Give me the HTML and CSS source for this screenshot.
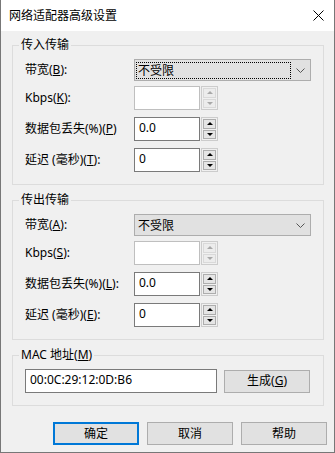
FILE: index.html
```html
<!DOCTYPE html>
<html lang="zh-CN">
<head>
  <meta charset="UTF-8" />
  <title>网络适配器高级设置</title>
  <link rel="stylesheet" href="styles.css">
</head>
<body>
  <div class="window">
    <div class="titlebar">
      <span class="title">网络适配器高级设置</span>
      <svg class="close" width="11" height="11" viewBox="0 0 11 11">
        <path d="M0.5 0.5 L10.5 10.5 M10.5 0.5 L0.5 10.5" stroke="#000" stroke-width="1" fill="none" />
      </svg>
    </div>

    <div class="content">
      <fieldset class="group">
        <legend>传入传输</legend>
        <div class="rows">
          <div class="row row-select">
            <label>带宽(<u>B</u>):</label>
            <div class="select">
              <span class="value focused">不受限</span>
              <span class="chevron"><svg width="9" height="5" viewBox="0 0 9 5"><path d="M0.5 0.5 L4.5 4.5 L8.5 0.5" stroke="#555" fill="none" /></svg></span>
            </div>
          </div>
          <div class="row">
            <label>Kbps(<u>K</u>):</label>
            <div class="spin disabled">
              <div class="field"></div>
              <div class="spinner"><span class="btn"><i class="up"></i></span><span class="btn"><i class="down"></i></span></div>
            </div>
          </div>
          <div class="row">
            <label>数据包丢失(%)(<u>P</u>)</label>
            <div class="spin">
              <div class="field">0.0</div>
              <div class="spinner"><span class="btn"><i class="up"></i></span><span class="btn"><i class="down"></i></span></div>
            </div>
          </div>
          <div class="row">
            <label>延迟 (毫秒)(<u>T</u>):</label>
            <div class="spin">
              <div class="field">0</div>
              <div class="spinner"><span class="btn"><i class="up"></i></span><span class="btn"><i class="down"></i></span></div>
            </div>
          </div>
        </div>
      </fieldset>

      <fieldset class="group">
        <legend>传出传输</legend>
        <div class="rows">
          <div class="row row-select">
            <label>带宽(<u>A</u>):</label>
            <div class="select">
              <span class="value">不受限</span>
              <span class="chevron"><svg width="9" height="5" viewBox="0 0 9 5"><path d="M0.5 0.5 L4.5 4.5 L8.5 0.5" stroke="#555" fill="none" /></svg></span>
            </div>
          </div>
          <div class="row">
            <label>Kbps(<u>S</u>):</label>
            <div class="spin disabled">
              <div class="field"></div>
              <div class="spinner"><span class="btn"><i class="up"></i></span><span class="btn"><i class="down"></i></span></div>
            </div>
          </div>
          <div class="row">
            <label>数据包丢失(%)(<u>L</u>):</label>
            <div class="spin">
              <div class="field">0.0</div>
              <div class="spinner"><span class="btn"><i class="up"></i></span><span class="btn"><i class="down"></i></span></div>
            </div>
          </div>
          <div class="row">
            <label>延迟 (毫秒)(<u>E</u>):</label>
            <div class="spin">
              <div class="field">0</div>
              <div class="spinner"><span class="btn"><i class="up"></i></span><span class="btn"><i class="down"></i></span></div>
            </div>
          </div>
        </div>
      </fieldset>

      <fieldset class="group">
        <legend>MAC 地址(<u>M</u>)</legend>
        <div class="rows mac-row">
          <div class="mac-field">00:0C:29:12:0D:B6</div>
          <button class="button small">生成(<u>G</u>)</button>
        </div>
      </fieldset>

      <div class="buttons">
        <button class="button default">确定</button>
        <button class="button">取消</button>
        <button class="button">帮助</button>
      </div>
    </div>
  </div>
</body>
</html>
```

FILE: styles.css
```css
* {
  box-sizing: border-box;
}
body {
  margin: 0;
  background: #fff;
  color: #000;
  font-family: "Noto Sans", "Noto Sans CJK SC", sans-serif;
  font-size: 12px;
}
.window {
  width: 335px;
  height: 453px;
  background: #f0f0f0;
  border: 1px solid #777;
  border-top: none;
}
.titlebar {
  height: 31px;
  background: #fff;
  display: flex;
  align-items: center;
  justify-content: space-between;
  padding: 0 10px 0 8px;
}
.title {
  line-height: 16px;
}
.close {
  display: block;
  margin-top: 0;
}
.content {
  padding: 6px 0 0 11px;
}
.group {
  width: 312px;
  margin: 0 0 0 0;
  padding: 0;
  border: 1px solid #dcdcdc;
}
.group + .group {
  margin-top: 7px;
}
.group legend {
  margin-left: 6px;
  padding: 0 2px;
  height: 16px;
  line-height: 16px;
}
.rows {
  padding: 6px 0 12px 12px;
}
.row {
  display: flex;
  align-items: center;
  height: 24px;
  margin-top: 7px;
}
.row-select {
  height: 22px;
  margin-top: 0;
}
.row-select + .row {
  margin-top: 5px;
}
.row label {
  flex: 0 0 109px;
  line-height: 16px;
  white-space: nowrap;
}
.select {
  width: 177px;
  height: 22px;
  display: flex;
  padding: 1px 0 1px 1px;
  background: #e1e1e1;
  border: 1px solid #adadad;
}
.select .value {
  flex: 0 0 155px;
  line-height: 16px;
  padding-left: 1px;
  border: 1px dotted transparent;
  margin-top: 1px;
  height: 17px;
}
.select .value.focused {
  border-color: #000;
}
.chevron {
  flex: 1;
  display: flex;
  align-items: center;
  justify-content: center;
}
.chevron svg {
  display: block;
}
.spin {
  display: flex;
  height: 24px;
}
.field {
  width: 66px;
  height: 24px;
  background: #fff;
  border: 1px solid #7a7a7a;
  padding-left: 4px;
  line-height: 20px;
}
.spinner {
  width: 17px;
  height: 24px;
  margin-left: 1px;
  border: 1px solid #cccccc;
  display: flex;
  flex-direction: column;
  padding: 1px;
  gap: 1px;
}
.spinner .btn {
  flex: 1;
  background: #e5e5e5;
  border: 1px solid #adadad;
  display: flex;
  align-items: center;
  justify-content: center;
}
.spinner i {
  width: 0;
  height: 0;
  border-left: 3px solid transparent;
  border-right: 3px solid transparent;
}
.spinner .up {
  border-bottom: 3px solid #000;
}
.spinner .down {
  border-top: 3px solid #000;
}
.spin.disabled .field {
  border-color: #bfbfbf;
}
.spin.disabled .spinner .btn {
  border-color: #d9d9d9;
  background: #ececec;
}
.spin.disabled .up {
  border-bottom-color: #a8a8a8;
}
.spin.disabled .down {
  border-top-color: #a8a8a8;
}
.mac-row {
  display: flex;
  align-items: center;
}
.mac-field {
  width: 192px;
  height: 24px;
  background: #fff;
  border: 1px solid #7a7a7a;
  padding-left: 4px;
  line-height: 20px;
}
.button {
  width: 86px;
  height: 23px;
  padding: 0;
  background: #e1e1e1;
  border: 1px solid #adadad;
  font: inherit;
  color: #000;
  line-height: 16px;
}
.button.small {
  margin-left: 7px;
}
.button.default {
  border: 2px solid #0078d7;
}
.buttons {
  display: flex;
  justify-content: flex-end;
  gap: 8px;
  margin: 16px 7px 0 0;
}
```
